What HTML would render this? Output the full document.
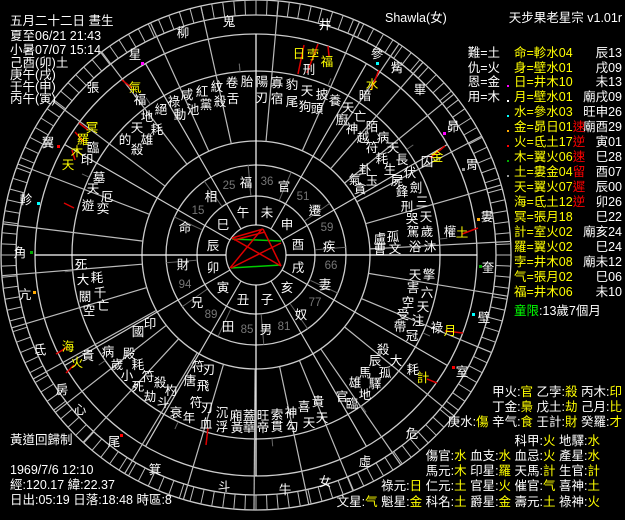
<!DOCTYPE html>
<html><head><meta charset="utf-8">
<style>
html,body{margin:0;padding:0;background:#000;}
svg{display:block;}
text{font-family:"Liberation Sans","WenQuanYi Zen Hei","Noto Sans CJK TC",sans-serif;fill:#fff;}
.s{font-size:12.5px;text-anchor:middle;dominant-baseline:central;}
.y{fill:#ff0;}
.r{fill:#f00;}
.g{fill:#888;}
.n{font-size:11.5px;fill:#777;text-anchor:middle;dominant-baseline:central;}
.t{font-size:12.5px;}
</style></head><body>
<svg id="sv" width="625" height="520" viewBox="0 0 625 520" xmlns="http://www.w3.org/2000/svg">
<rect width="625" height="520" fill="#000"/>
<g fill="none" stroke="#ccc" stroke-width="1.3">
<circle cx="256" cy="255" r="255"/>
<circle cx="256" cy="255" r="240"/>
<circle cx="256" cy="255" r="221"/>
<circle cx="256" cy="255" r="184"/>
<circle cx="256" cy="255" r="114"/>
<circle cx="256" cy="255" r="90"/>
<circle cx="256" cy="255" r="59"/>
<circle cx="256" cy="255" r="30"/>
</g>
<g id="lines" stroke="#ccc" stroke-width="1.2"></g>
<g stroke-width="1.5">
<line x1="232" y1="239" x2="281" y2="241" stroke="#0c0"/>
<line x1="231" y1="268" x2="281" y2="265" stroke="#0c0"/>
<line x1="232" y1="238" x2="263" y2="229" stroke="#d00"/>
<line x1="234" y1="240" x2="265" y2="232" stroke="#d00"/>
<line x1="263" y1="229" x2="281" y2="266" stroke="#d00"/>
<line x1="231" y1="268" x2="281" y2="243" stroke="#d00"/>
<line x1="232" y1="238" x2="281" y2="266" stroke="#d00"/>
<line x1="230" y1="268" x2="262" y2="229" stroke="#d00"/>
</g>
<g stroke="#d00" stroke-width="1.5">
<line x1="304" y1="45" x2="298" y2="74"/><line x1="318" y1="44" x2="307" y2="73"/><line x1="328" y1="46" x2="329" y2="56"/>
<line x1="379" y1="70" x2="371" y2="90"/><line x1="445" y1="146" x2="430" y2="158"/>
<line x1="478" y1="228" x2="462" y2="234"/><line x1="463" y1="333" x2="445" y2="331"/><line x1="437" y1="383" x2="427" y2="379"/>
<line x1="79" y1="123" x2="88" y2="130"/><line x1="75" y1="132" x2="84" y2="142"/><line x1="72" y1="150" x2="75" y2="160"/>
<line x1="64" y1="203" x2="74" y2="208"/><line x1="56" y1="354" x2="66" y2="348"/><line x1="66" y1="373" x2="74" y2="365"/>
<line x1="122" y1="80" x2="132" y2="88"/><line x1="208" y1="428" x2="206" y2="445"/>
</g>
<g class="t">
<text x="10" y="25">五月二十二日 晝生</text>
<text x="10" y="40">夏至06/21 21:43</text>
<text x="10" y="54">小暑07/07 15:14</text>
<text x="10" y="67">己酉(卯)土</text>
<text x="10" y="79">庚午(戌)</text>
<text x="10" y="91">壬午(申)</text>
<text x="10" y="103">丙午(寅)</text>
<text x="10" y="444">黃道回歸制</text>
<text x="10" y="474">1969/7/6 12:10</text>
<text x="10" y="489">經:120.17 緯:22.37</text>
<text x="10" y="504">日出:05:19 日落:18:48 時區:8</text>
<text x="385" y="22">Shawla(女)</text>
<text x="622" y="22" text-anchor="end">天步果老星宗 v1.01r</text>
</g>
<g class="t">
<g text-anchor="end">
<text x="500" y="57">難=土</text><text x="500" y="72">仇=火</text><text x="500" y="86">恩=金</text><text x="500" y="101">用=木</text>
<text x="622" y="57">辰13</text><text x="622" y="72">戌09</text><text x="622" y="86">未13</text><text x="622" y="101">廟戌09</text>
<text x="622" y="116">旺申26</text><text x="622" y="131">廟酉29</text><text x="622" y="146">寅01</text><text x="622" y="161">巳28</text>
<text x="622" y="176">酉07</text><text x="622" y="191">辰00</text><text x="622" y="206">卯26</text><text x="622" y="221">巳22</text>
<text x="622" y="236">廟亥24</text><text x="622" y="251">巳24</text><text x="622" y="266">廟未12</text><text x="622" y="281">巳06</text><text x="622" y="296">未10</text>
</g>
<g class="y">
<text x="514" y="57" class="y">命=軫水04</text><text x="514" y="72" class="y">身=壁水01</text><text x="514" y="86" class="y">日=井木10</text>
<text x="514" y="101" class="y">月=壁水01</text><text x="514" y="116" class="y">水=參水03</text>
<text x="514" y="131" class="y">金=昴日01<tspan class="r">速</tspan></text>
<text x="514" y="146" class="y">火=氐土17<tspan class="r">逆</tspan></text>
<text x="514" y="161" class="y">木=翼火06<tspan class="r">速</tspan></text>
<text x="514" y="176" class="y">土=婁金04<tspan class="r">留</tspan></text>
<text x="514" y="191" class="y">天=翼火07<tspan class="r">遲</tspan></text>
<text x="514" y="206" class="y">海=氐土12<tspan class="r">逆</tspan></text>
<text x="514" y="221" class="y">冥=張月18</text><text x="514" y="236" class="y">計=室火02</text><text x="514" y="251" class="y">羅=翼火02</text>
<text x="514" y="266" class="y">孛=井木08</text><text x="514" y="281" class="y">气=張月02</text><text x="514" y="296" class="y">福=井木06</text>
</g>
<text x="514" y="315"><tspan style="fill:#0f0">童限</tspan>:13歲7個月</text>
</g>
<g>
<rect x="507" y="85" width="2" height="2" fill="#f0f"/><rect x="507" y="100" width="2" height="2" fill="#fff"/>
<rect x="507" y="115" width="2" height="2" fill="#0ff"/><rect x="507" y="130" width="2" height="2" fill="#fa0"/>
<rect x="507" y="145" width="2" height="2" fill="#f00"/><rect x="507" y="160" width="2" height="2" fill="#0a0"/>
<rect x="507" y="175" width="2" height="2" fill="#999"/>
</g>
<g style="font-size:12.5px" text-anchor="end">
<text x="622" y="396">甲火:<tspan class="y">官</tspan> 乙孛:<tspan class="y">殺</tspan> 丙木:<tspan class="y">印</tspan></text>
<text x="622" y="411">丁金:<tspan class="y">梟</tspan> 戊土:<tspan class="y">劫</tspan> 己月:<tspan class="y">比</tspan></text>
<text x="622" y="426">庚水:<tspan class="y">傷</tspan> 辛气:<tspan class="y">食</tspan> 壬計:<tspan class="y">財</tspan> 癸羅:<tspan class="y">才</tspan></text>
<text x="600" y="445">科甲:<tspan class="y">火</tspan> 地驛:<tspan class="y">水</tspan></text>
<text x="600" y="460">傷官:<tspan class="y">水</tspan> 血支:<tspan class="y">水</tspan> 血忌:<tspan class="y">火</tspan> 產星:<tspan class="y">水</tspan></text>
<text x="600" y="475">馬元:<tspan class="y">木</tspan> 印星:<tspan class="y">羅</tspan> 天馬:<tspan class="y">計</tspan> 生官:<tspan class="y">計</tspan></text>
<text x="600" y="490">祿元:<tspan class="y">日</tspan> 仁元:<tspan class="y">土</tspan> 官星:<tspan class="y">火</tspan> 催官:<tspan class="y">气</tspan> 喜神:<tspan class="y">土</tspan></text>
<text x="600" y="506">文星:<tspan class="y">气</tspan> 魁星:<tspan class="y">金</tspan> 科名:<tspan class="y">土</tspan> 爵星:<tspan class="y">金</tspan> 壽元:<tspan class="y">土</tspan> 祿神:<tspan class="y">火</tspan></text>
</g>
<g class="s">
<text x="229" y="22">鬼</text><text x="325" y="25">井</text><text x="183" y="33">柳</text><text x="377" y="54">參</text>
<text x="135" y="55">星</text><text x="397" y="68">觜</text><text x="93" y="88">張</text><text x="420" y="90">畢</text>
<text x="453" y="127">昴</text><text x="48" y="143">翼</text><text x="472" y="165">胃</text><text x="26" y="200">軫</text>
<text x="487" y="217">婁</text><text x="20" y="253">角</text><text x="488" y="268">奎</text><text x="25" y="295">亢</text>
<text x="484" y="318">壁</text><text x="40" y="350">氐</text><text x="462" y="372">室</text><text x="62" y="390">房</text>
<text x="80" y="410">心</text><text x="412" y="434">危</text><text x="114" y="442">尾</text><text x="365" y="462">虛</text>
<text x="155" y="470">箕</text><text x="325" y="482">女</text><text x="224" y="487">斗</text><text x="285" y="490">牛</text>
</g>
<g class="s">
<text x="243" y="213">午</text><text x="267" y="213">未</text><text x="223" y="225">巳</text><text x="287" y="225">申</text>
<text x="213" y="246">辰</text><text x="298" y="245">酉</text><text x="213" y="268">卯</text><text x="298" y="268">戌</text>
<text x="223" y="288">寅</text><text x="287" y="288">亥</text><text x="243" y="300">丑</text><text x="267" y="300">子</text>
<text x="246" y="183">福</text><text x="284" y="187">官</text><text x="211" y="197">相</text><text x="315" y="211">遷</text>
<text x="185" y="228">命</text><text x="329" y="247">疾</text><text x="183" y="265">財</text><text x="325" y="285">妻</text>
<text x="197" y="303">兄</text><text x="301" y="315">奴</text><text x="228" y="327">田</text><text x="266" y="330">男</text>
</g>
<g>
<text class="n" x="229" y="186">25</text><text class="n" x="267" y="182">36</text><text class="n" x="303" y="197">51</text>
<text class="n" x="198" y="211">15</text><text class="n" x="327" y="228">59</text><text class="n" x="331" y="266">66</text>
<text class="n" x="185" y="285">94</text><text class="n" x="315" y="303">77</text><text class="n" x="211" y="315">89</text>
<text class="n" x="247" y="330">85</text><text class="n" x="284" y="327">81</text>
</g>
<g class="s">
<text x="299" y="54" class="y">日</text><text x="313" y="55" class="y">孛</text><text x="327" y="62" class="y">福</text><text x="309" y="70">刑</text>
<text x="372" y="85" class="y">水</text><text x="365" y="96">暗</text>
<text x="247" y="82">胎</text><text x="262" y="82">陽</text><text x="277" y="83">寡</text><text x="292" y="85">豹</text><text x="307" y="91">天</text><text x="322" y="95">披</text><text x="335" y="101">養</text>
<text x="232" y="83">卷</text><text x="217" y="87">紋</text><text x="202" y="92">紅</text><text x="187" y="95">咸</text><text x="174" y="102">祿</text><text x="161" y="110">絕</text>
<text x="262" y="98">刃</text><text x="277" y="99">宿</text><text x="292" y="102">尾</text><text x="305" y="107">狗</text><text x="317" y="109">頭</text>
<text x="233" y="99">舌</text><text x="220" y="102">殺</text><text x="206" y="105">黨</text><text x="193" y="110">池</text><text x="180" y="115">動</text>
<text x="348" y="108">天</text><text x="342" y="120">廚</text><text x="360" y="117">亡</text><text x="352" y="129">神</text><text x="372" y="127">陌</text>
<text x="363" y="138">越</text><text x="383" y="138">病</text><text x="372" y="148">符</text><text x="393" y="148">天</text><text x="382" y="159">耗</text><text x="402" y="160">長</text>
<text x="437" y="157" class="y">金</text><text x="427" y="162">囚</text>
<text x="365" y="170">卦</text><text x="390" y="170">生</text><text x="410" y="173">伏</text><text x="355" y="180">氣</text><text x="372" y="181">玉</text><text x="397" y="181">屍</text>
<text x="416" y="188">劍</text><text x="360" y="189">貪</text><text x="402" y="192">鋒</text><text x="407" y="207">刑</text><text x="422" y="202">三</text>
<text x="412" y="219">哭</text><text x="426" y="217">天</text><text x="413" y="232">駕</text><text x="427" y="232">歲</text><text x="393" y="237">孤</text><text x="380" y="239">盧</text>
<text x="430" y="247">沐</text><text x="415" y="247">浴</text><text x="395" y="249">文</text><text x="380" y="250">曹</text>
<text x="450" y="232">權</text><text x="462" y="233" class="y">土</text>
<text x="415" y="275">天</text><text x="429" y="275">擎</text><text x="413" y="288">害</text><text x="427" y="293">六</text><text x="408" y="303">空</text><text x="423" y="307">天</text>
<text x="403" y="315">受</text><text x="418" y="321">注</text><text x="400" y="327">帶</text><text x="412" y="336">冠</text><text x="437" y="328">祿</text><text x="450" y="331" class="y">月</text>
<text x="383" y="350">殺</text><text x="396" y="361">大</text><text x="375" y="361">辰</text><text x="385" y="373">孤</text><text x="365" y="373">馬</text>
<text x="413" y="370">耗</text><text x="423" y="378" class="y">計</text><text x="355" y="383">雄</text><text x="375" y="384">驛</text><text x="365" y="395">地</text>
<text x="342" y="397">官</text><text x="352" y="404">臨</text>
<text x="92" y="128" class="y">冥</text><text x="83" y="140" class="y">羅</text><text x="93" y="148">臨</text><text x="77" y="152" class="y">木</text>
<text x="87" y="160">印</text><text x="68" y="165" class="y">天</text>
<text x="147" y="117">地</text><text x="137" y="128">天</text><text x="157" y="130">耗</text><text x="125" y="140">的</text><text x="147" y="140">雄</text><text x="137" y="150">殺</text>
<text x="99" y="178">墓</text><text x="93" y="189">天</text><text x="107" y="197">厄</text><text x="88" y="206">遊</text><text x="103" y="209">奕</text>
<text x="81" y="265">死</text><text x="83" y="280">大</text><text x="97" y="278">耗</text><text x="85" y="297">關</text><text x="100" y="293">千</text><text x="89" y="311">空</text><text x="103" y="306">亡</text>
<text x="150" y="324">印</text><text x="138" y="332">國</text><text x="68" y="347" class="y">海</text><text x="77" y="363" class="y">火</text><text x="88" y="356">貴</text>
<text x="108" y="352">病</text><text x="129" y="354">殿</text><text x="117" y="365">歲</text><text x="138" y="365">耗</text><text x="127" y="376">小</text><text x="148" y="377">符</text>
<text x="138" y="387">死</text><text x="160" y="383">殺</text><text x="150" y="397">劫</text><text x="171" y="391">杓</text><text x="163" y="403">斗</text>
<text x="176" y="413">衰</text><text x="189" y="418">年</text><text x="196" y="403">符</text><text x="207" y="408">刃</text><text x="206" y="424">血</text>
<text x="222" y="413">沉</text><text x="222" y="427">浮</text><text x="236" y="416">廂</text><text x="237" y="428">黃</text><text x="249" y="416">蓋</text><text x="249" y="428">華</text>
<text x="263" y="416">旺</text><text x="263" y="428">帝</text><text x="277" y="415">索</text><text x="277" y="427">貫</text><text x="291" y="413">神</text><text x="292" y="427">勾</text>
<text x="304" y="407">喜</text><text x="309" y="423">天</text><text x="318" y="402">貴</text><text x="322" y="418">天</text>
<text x="198" y="367">符</text><text x="209" y="370">刃</text><text x="190" y="381">唐</text><text x="203" y="386">飛</text>
<text x="135" y="88" class="y">氣</text><text x="140" y="100">福</text>
</g>
<g>
<rect x="141" y="62" width="3" height="3" fill="#f0f"/><rect x="376" y="62" width="3" height="3" fill="#0ff"/>
<rect x="443" y="132" width="3" height="3" fill="#f0f"/><rect x="462" y="168" width="3" height="3" fill="#999"/>
<rect x="477" y="218" width="3" height="3" fill="#fa0"/><rect x="479" y="265" width="3" height="3" fill="#0a0"/>
<rect x="472" y="313" width="3" height="3" fill="#0ff"/><rect x="452" y="366" width="3" height="3" fill="#f00"/>
<rect x="37" y="202" width="3" height="3" fill="#0ff"/><rect x="30" y="251" width="3" height="3" fill="#0a0"/>
<rect x="33" y="291" width="3" height="3" fill="#fa0"/><rect x="57" y="145" width="3" height="3" fill="#f00"/>
<rect x="120" y="434" width="3" height="3" fill="#f00"/>
</g>
</svg>
<script>
(function(){
var g=document.getElementById('lines'),cx=256,cy=255,s='';
function L(a,r1,r2,c,w){var t=a*Math.PI/180,sn=Math.sin(t),cs=Math.cos(t);
s+='<line x1="'+(cx+r1*sn).toFixed(1)+'" y1="'+(cy-r1*cs).toFixed(1)+'" x2="'+(cx+r2*sn).toFixed(1)+'" y2="'+(cy-r2*cs).toFixed(1)+'"'+(c?' stroke="'+c+'"':'')+(w?' stroke-width="'+w+'"':'')+'/>';}
for(var k=0;k<12;k++){L(k*30,30,221,k%3==0?'#fff':'#ccc');}
var m=[16.7,31.2,37,44.8,57,67.4,80.7,93.2,105.4,119.6,138.6,152.2,163.1,173,187.9,205.2,216.8,228.6,235.2,246.6,260.2,270.5,283.5,298.3,316,329.5,341.6,353.4];
for(var i=0;i<m.length;i++){var a=m[i],b=m[(i+1)%m.length];if(b<a)b+=360;L((a+b)/2,114,255,'#bbb');}
for(var d=0;d<360;d+=2.5){L(d,240,255,'#bbb',1);}
var gr=[-20,8,40,70,100,130,160,190,220,250,280,310,340];
for(var j=0;j<gr.length;j++){L(gr[j]+15,60,90,'#666',1);L(gr[j]+15,184,192,'#666',1);}
g.innerHTML=s;
})();
</script>
</body></html>
